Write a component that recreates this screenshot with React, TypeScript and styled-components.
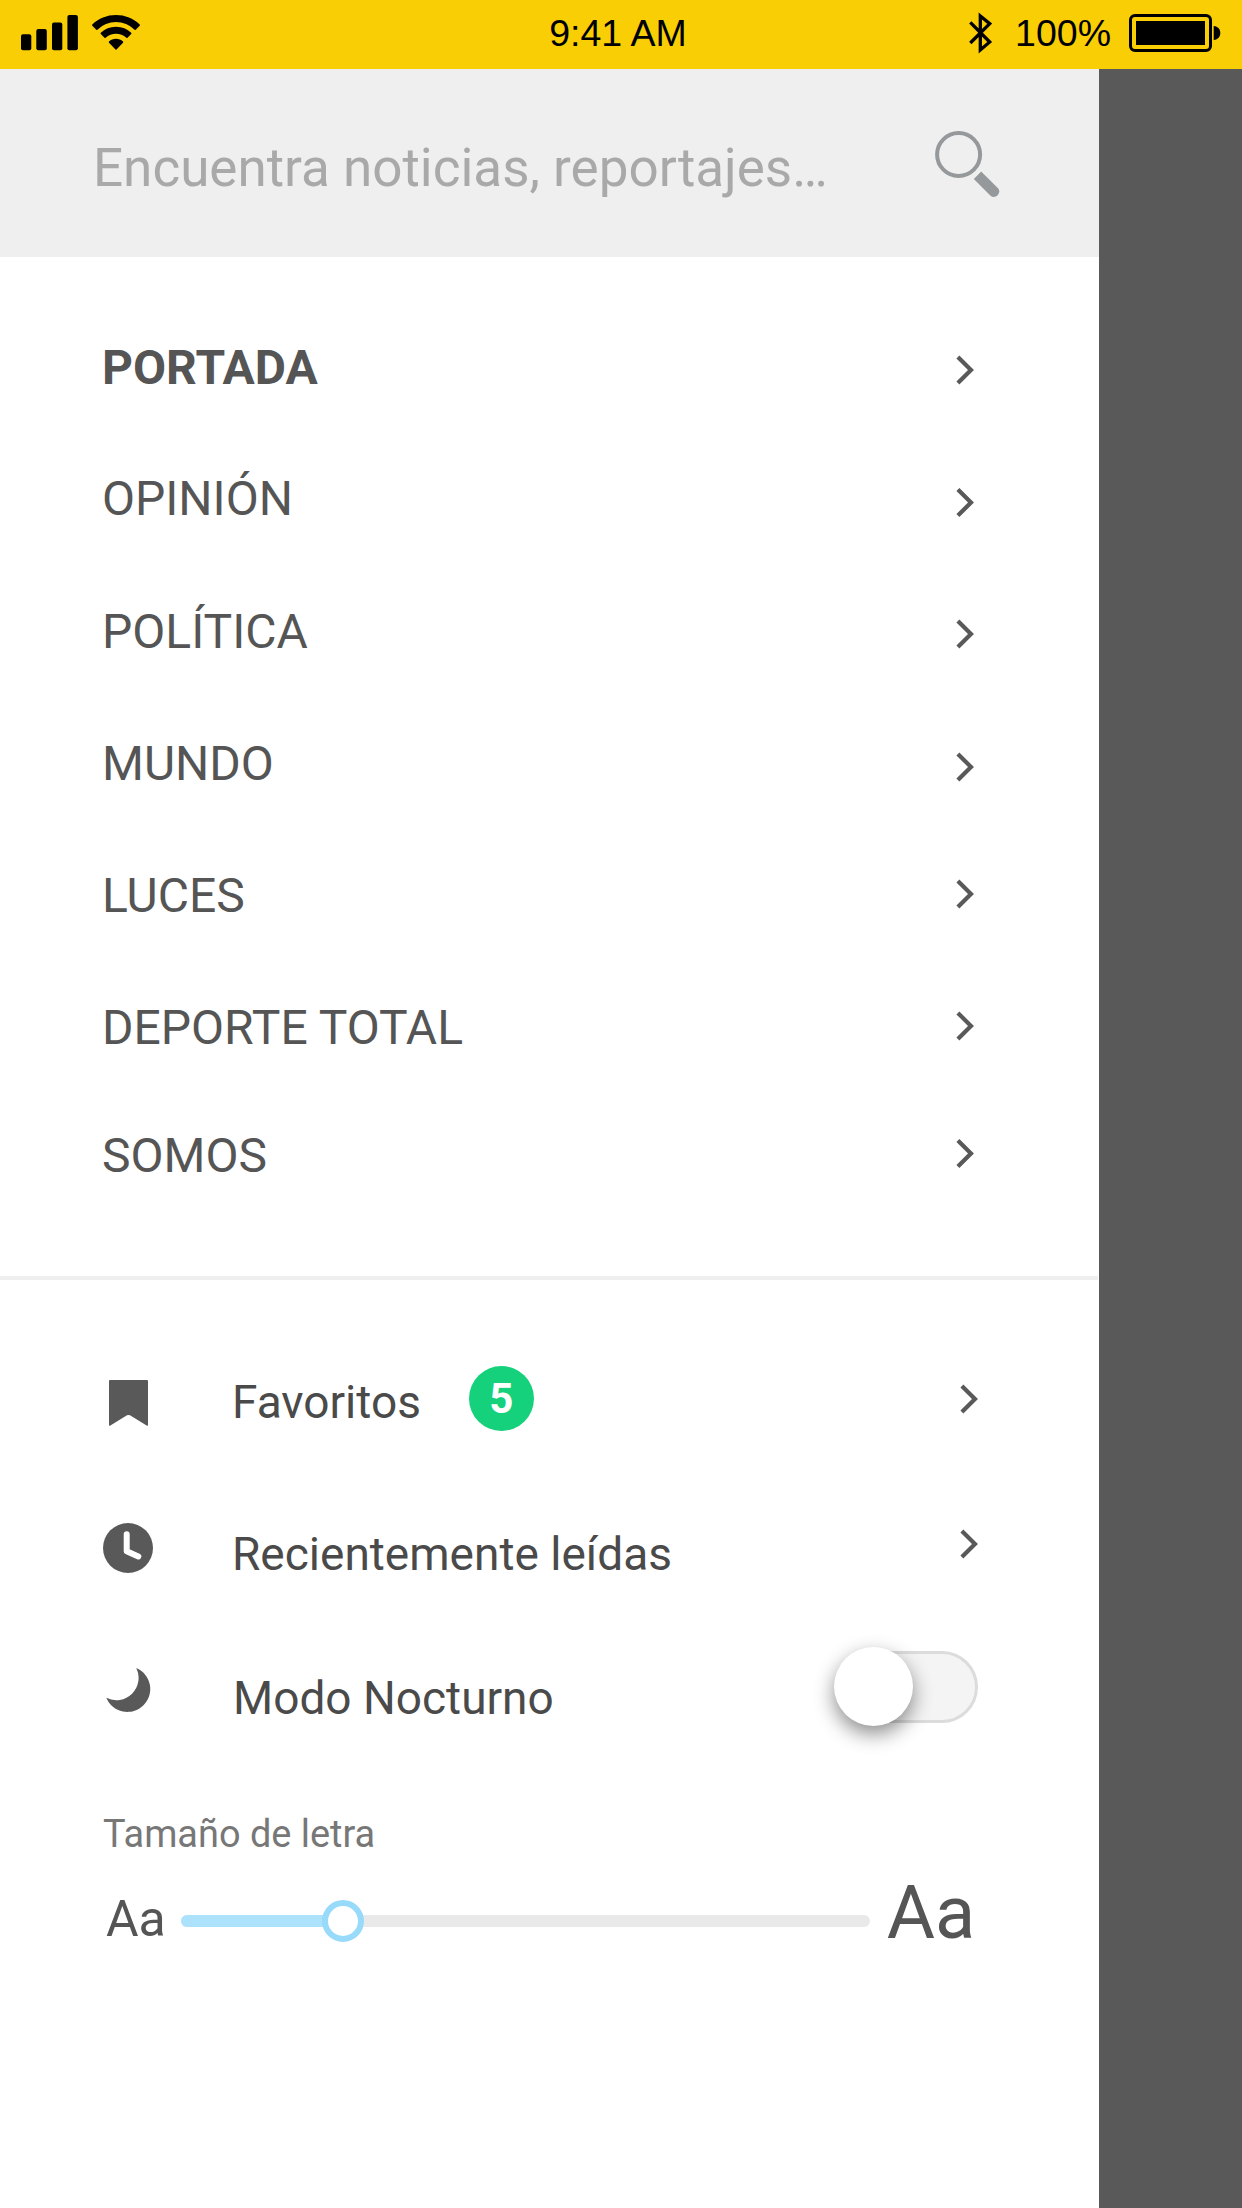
import React from "react";
import styled, { createGlobalStyle } from "styled-components";

const GlobalStyle = createGlobalStyle`
  *, *::before, *::after { box-sizing: border-box; }
  body { margin: 0; background: #595959; font-family: Roboto, "Noto Sans", sans-serif; }
  svg { display: block; flex: none; }
`;

const Screen = styled.div`
  width: 1242px;
  height: 2208px;
  display: flex;
  flex-direction: column;
  overflow: hidden;
  background: #595959;
`;

const StatusBar = styled.header`
  height: 69px;
  flex: none;
  display: grid;
  grid-template-columns: 1fr auto 1fr;
  align-items: center;
  padding: 0 21px 3px;
  background: #f9ce05;
  color: #000;
  font: 37.5px/40px "Liberation Sans", Arial, sans-serif;
`;

const StatusGroup = styled.div<{ $end?: boolean }>`
  display: flex;
  align-items: center;
  gap: 14px;
  justify-content: ${(p) => (p.$end ? "flex-end" : "flex-start")};
`;

const Clock = styled.time`
  padding-right: 6px;
`;

const BatteryLevel = styled.span`
  margin: 0 4px 0 8px;
`;

const Drawer = styled.aside`
  width: 1099px;
  flex: 1;
  display: flex;
  flex-direction: column;
  background: #fff;
`;

const SearchBar = styled.div`
  height: 188px;
  flex: none;
  display: flex;
  align-items: flex-start;
  justify-content: space-between;
  padding: 62px 98px 0 93px;
  background: #efefef;
`;

const Placeholder = styled.span`
  margin-top: 6px;
  font-size: 53px;
  line-height: 62px;
  color: #a9a9a9;
  white-space: nowrap;
`;

const Sections = styled.nav`
  flex: none;
  height: 1023px;
  border-bottom: 4px solid #efefef;
  padding: 81px 124px 0 102px;
  margin-right: 1px;
`;

const SectionRow = styled.a<{ $gap: number; $active?: boolean }>`
  height: 60px;
  margin-top: ${(p) => p.$gap}px;
  display: flex;
  align-items: center;
  justify-content: space-between;
  font-size: 48px;
  line-height: 60px;
  font-weight: ${(p) => (p.$active ? 700 : 400)};
  color: #555;
`;

const ChevronSvg = styled.svg<{ $nudge: number }>`
  transform: translateY(${(p) => p.$nudge}px);
`;

const Tools = styled.section`
  padding: 92px 121px 0 103px;
`;

const ToolRow = styled.div<{ $height: number }>`
  height: ${(p) => p.$height}px;
  display: flex;
  align-items: flex-start;
`;

const IconSlot = styled.div<{ $top: number }>`
  width: 129px;
  padding-top: ${(p) => p.$top}px;
`;

const ToolLabel = styled.span<{ $top: number; $indent?: number }>`
  margin-top: ${(p) => p.$top}px;
  margin-left: ${(p) => p.$indent ?? 0}px;
  font-size: 46px;
  line-height: 60px;
  color: #4a4a4a;
  white-space: nowrap;
`;

const Trailing = styled.div<{ $top: number }>`
  margin: ${(p) => p.$top}px 0 0 auto;
`;

const Badge = styled.span`
  width: 65px;
  height: 65px;
  margin: -6px 0 0 48px;
  border-radius: 50%;
  background: #16d17c;
  color: #fff;
  font: 700 42px/65px Roboto, sans-serif;
  text-align: center;
`;

const Toggle = styled.button`
  display: block;
  width: 137px;
  height: 72px;
  padding: 0;
  border: 3px solid #dcdcdc;
  border-radius: 36px;
  background: #f4f4f4;
`;

const ToggleKnob = styled.span`
  display: block;
  width: 79px;
  height: 79px;
  margin: -7px 0 0 -10px;
  border-radius: 50%;
  background: #fff;
  box-shadow: 0 8px 20px rgba(0, 0, 0, 0.45);
`;

const SizeLabel = styled.div`
  font-size: 37.9px;
  line-height: 44px;
  color: #777;
`;

const SizeRow = styled.div`
  display: flex;
  align-items: flex-start;
  margin-top: 19px;
  padding-left: 3px;
`;

const Sample = styled.span<{ $size: number; $top: number }>`
  flex: none;
  margin-top: ${(p) => p.$top}px;
  font-size: ${(p) => p.$size}px;
  line-height: 88px;
  color: #555;
`;

const Track = styled.div`
  flex: none;
  display: flex;
  align-items: center;
  width: 689px;
  height: 12px;
  margin: 40px 17px 0 15px;
  border-radius: 6px;
  background: #e9e9e9;
`;

const Fill = styled.div`
  height: 12px;
  border-radius: 6px 0 0 6px;
  background: #ace2fc;
`;

const SliderKnob = styled.div`
  flex: none;
  width: 42px;
  height: 42px;
  margin-left: -21px;
  border: 6px solid #98dafa;
  border-radius: 50%;
  background: #fff;
`;

const Chevron = ({ nudge = 0 }: { nudge?: number }) => (
  <ChevronSvg $nudge={nudge} width="18" height="30" viewBox="0 0 18 30">
    <path d="M1.9 1.9 15 15 1.9 28.1" fill="none" stroke="#595959" strokeWidth="4.2" />
  </ChevronSvg>
);

const SignalIcon = () => (
  <svg width="57" height="36" viewBox="0 0 57 36">
    <rect x="0" y="19.2" width="10.3" height="16" rx="2" />
    <rect x="15.3" y="14" width="10.5" height="21.2" rx="2" />
    <rect x="31" y="7.4" width="10.3" height="27.8" rx="2" />
    <rect x="46.4" y="0" width="10.5" height="35.2" rx="2" />
  </svg>
);

const WifiIcon = () => (
  <svg width="48" height="36" viewBox="0 0 48 36">
    <path d="M24 0C33 0 41.500 3.400 47.700 9.400Q48.300 10 47.700 10.700L43.700 14.700Q43.200 15.200 42.600 14.700A26.500 26.500 0 0 0 5.400 14.700Q4.800 15.200 4.300 14.700L.3 10.700Q-.3 10 .3 9.400C6.500 3.400 15 0 24 0Z" />
    <path d="M24 11.700C30 11.700 35.300 13.900 39.200 17.800Q39.700 18.400 39.200 19L35.500 22.700Q35 23.200 34.400 22.700A15.500 15.500 0 0 0 13.600 22.700Q13 23.200 12.500 22.700L8.800 19Q8.300 18.400 8.800 17.800C12.700 13.900 18 11.700 24 11.700Z" />
    <path d="M24 23.800C26.700 23.800 29.100 24.800 31 26.600Q31.500 27.200 31 27.800L24.500 34.500Q24 35 23.500 34.500L17 27.800Q16.500 27.200 17 26.600C18.900 24.800 21.300 23.800 24 23.800Z" />
  </svg>
);

const BluetoothIcon = () => (
  <svg width="24" height="42" viewBox="0 0 24 42">
    <path
      d="M1.300 10.300 20.700 30 11.300 38V4L20.700 11.700 1.300 31"
      fill="none"
      stroke="#000"
      strokeWidth="3.300"
    />
  </svg>
);

const BatteryIcon = () => (
  <svg width="92" height="38" viewBox="0 0 92 38">
    <rect x="1.500" y="1.500" width="80" height="35" rx="4.500" fill="none" stroke="#000" strokeWidth="3" />
    <rect x="7" y="7" width="69" height="24" />
    <path d="M84.700 12C93.500 12.500 93.500 25.500 84.700 26Z" />
  </svg>
);

const SearchIcon = () => (
  <svg width="66" height="67" viewBox="0 0 66 67">
    <circle cx="23.600" cy="23.500" r="21.500" fill="none" stroke="#95999b" strokeWidth="4" />
    <path d="M38.800 47.900 46.200 40.500 63 57.200A5.350 5.350 0 0 1 55.500 64.700Z" fill="#95999b" />
  </svg>
);

const BookmarkIcon = () => (
  <svg width="50" height="46" viewBox="0 0 50 46">
    <path d="M7 0H44Q45 0 45 1V45Q45 46 44 45.700L27 35.300Q25.500 34.500 24 35.300L7 45.700Q6 46 6 45V1Q6 0 7 0Z" fill="#595959" />
  </svg>
);

const ClockIcon = () => (
  <svg width="50" height="50" viewBox="0 0 50 50">
    <circle cx="25" cy="25" r="25" fill="#595959" />
    <path
      d="M23.700 11.200V28.200L35.300 33.400"
      fill="none"
      stroke="#fff"
      strokeWidth="6"
      strokeLinecap="round"
      strokeLinejoin="round"
    />
  </svg>
);

const MoonIcon = () => (
  <svg width="50" height="45" viewBox="0 0 50 45">
    <path d="M33.300 0A22.850 22.850 0 1 1 3.300 29.800A22.300 22.300 0 0 0 33.300 0Z" fill="#595959" />
  </svg>
);

const sections = [
  { name: "PORTADA", gap: 0, nudge: 2, active: true },
  { name: "OPINIÓN", gap: 71, nudge: 3.5 },
  { name: "POLÍTICA", gap: 73, nudge: 2 },
  { name: "MUNDO", gap: 72, nudge: 3 },
  { name: "LUCES", gap: 72, nudge: -2 },
  { name: "DEPORTE TOTAL", gap: 72, nudge: -2 },
  { name: "SOMOS", gap: 68, nudge: -2.5 },
];

const FONT_SCALE = 162 / 689;

export default function App() {
  return (
    <>
      <GlobalStyle />
      <Screen>
        <StatusBar>
          <StatusGroup>
            <SignalIcon />
            <WifiIcon />
          </StatusGroup>
          <Clock>9:41 AM</Clock>
          <StatusGroup $end>
            <BluetoothIcon />
            <BatteryLevel>100%</BatteryLevel>
            <BatteryIcon />
          </StatusGroup>
        </StatusBar>
        <Drawer>
          <SearchBar>
            <Placeholder>Encuentra noticias, reportajes…</Placeholder>
            <SearchIcon />
          </SearchBar>
          <Sections>
            {sections.map((s) => (
              <SectionRow key={s.name} $gap={s.gap} $active={s.active}>
                {s.name}
                <Chevron nudge={s.nudge} />
              </SectionRow>
            ))}
          </Sections>
          <Tools>
            <ToolRow $height={151}>
              <IconSlot $top={8}>
                <BookmarkIcon />
              </IconSlot>
              <ToolLabel $top={0}>Favoritos</ToolLabel>
              <Badge>5</Badge>
              <Trailing $top={12}>
                <Chevron />
              </Trailing>
            </ToolRow>
            <ToolRow $height={144}>
              <IconSlot $top={0}>
                <ClockIcon />
              </IconSlot>
              <ToolLabel $top={1}>Recientemente leídas</ToolLabel>
              <Trailing $top={6}>
                <Chevron />
              </Trailing>
            </ToolRow>
            <ToolRow $height={145}>
              <IconSlot $top={1}>
                <MoonIcon />
              </IconSlot>
              <ToolLabel $top={1} $indent={1}>Modo Nocturno</ToolLabel>
              <Trailing $top={-16}>
                <Toggle>
                  <ToggleKnob />
                </Toggle>
              </Trailing>
            </ToolRow>
            <SizeLabel>Tamaño de letra</SizeLabel>
            <SizeRow>
              <Sample $size={50} $top={0}>Aa</Sample>
              <Track>
                <Fill style={{ width: `${FONT_SCALE * 100}%` }} />
                <SliderKnob />
              </Track>
              <Sample $size={74} $top={-6}>Aa</Sample>
            </SizeRow>
          </Tools>
        </Drawer>
      </Screen>
    </>
  );
}
